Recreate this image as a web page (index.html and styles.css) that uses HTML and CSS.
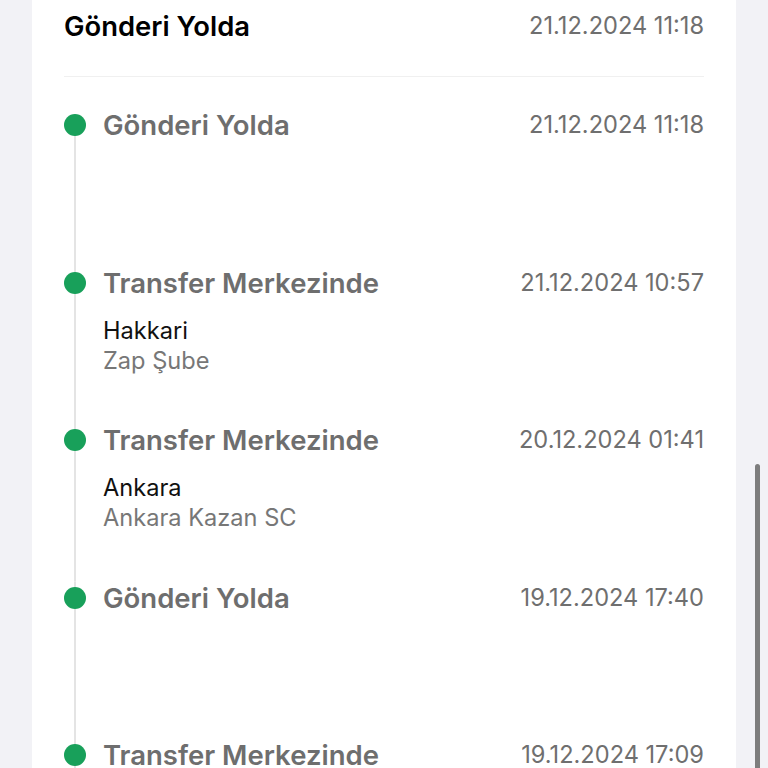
FILE: index.html
```html
<!DOCTYPE html>
<html lang="tr">
<head>
<meta charset="utf-8">
<link rel="stylesheet" href="styles.css">
</head>
<body>
<div class="page">
  <div class="card">
    <div class="header">
      <div class="header-title">Gönderi Yolda</div>
      <div class="date">21.12.2024 11:18</div>
    </div>
    <div class="timeline">
      <div class="item first">
        <div class="rail"><span class="dot"></span></div>
        <div class="body">
          <div class="row"><span class="title">Gönderi Yolda</span><span class="date">21.12.2024 11:18</span></div>
        </div>
      </div>
      <div class="item">
        <div class="rail"><span class="dot"></span></div>
        <div class="body">
          <div class="row"><span class="title">Transfer Merkezinde</span><span class="date">21.12.2024 10:57</span></div>
          <div class="city">Hakkari</div>
          <div class="branch">Zap Şube</div>
        </div>
      </div>
      <div class="item">
        <div class="rail"><span class="dot"></span></div>
        <div class="body">
          <div class="row"><span class="title">Transfer Merkezinde</span><span class="date">20.12.2024 01:41</span></div>
          <div class="city">Ankara</div>
          <div class="branch">Ankara Kazan SC</div>
        </div>
      </div>
      <div class="item">
        <div class="rail"><span class="dot"></span></div>
        <div class="body">
          <div class="row"><span class="title">Gönderi Yolda</span><span class="date">19.12.2024 17:40</span></div>
        </div>
      </div>
      <div class="item">
        <div class="rail"><span class="dot"></span></div>
        <div class="body">
          <div class="row"><span class="title">Transfer Merkezinde</span><span class="date">19.12.2024 17:09</span></div>
        </div>
      </div>
    </div>
  </div>
</div>
<div class="scroll-indicator"></div>
</body>
</html>
```
FILE: styles.css
```css
html, body {
  margin: 0;
  padding: 0;
  height: 768px;
  overflow: hidden;
  background: #f2f2f6;
  font-family: Inter, "Noto Sans", sans-serif;
}
.page {
  padding: 0 32px;
}
.card {
  background: #ffffff;
  padding: 10px 32px 0;
  min-height: 800px;
}
.header {
  display: flex;
  justify-content: space-between;
  align-items: center;
  height: 32px;
  padding-bottom: 34px;
  border-bottom: 1px solid #f0f0f0;
}
.header-title {
  font-size: 27.4px;
  font-weight: 600;
  color: #000;
  line-height: 32px;
}
.date {
  font-size: 23.6px;
  color: #6f6f6f;
  line-height: 32px;
  font-weight: 400;
}
.timeline {
  padding-top: 32px;
}
.item {
  display: grid;
  grid-template-columns: 22px 1fr;
  column-gap: 17px;
  height: 157.5px;
}
.rail {
  background: linear-gradient(#e4e4e4, #e4e4e4) center / 2px 100% no-repeat;
  display: flex;
  justify-content: center;
}
.item.first .rail {
  background-position: center 16px;
}
.dot {
  width: 22px;
  height: 22px;
  border-radius: 50%;
  background: #18a05a;
  margin-top: 5px;
}
.row {
  display: flex;
  justify-content: space-between;
  align-items: center;
  height: 32px;
}
.title {
  font-size: 27.5px;
  font-weight: 600;
  color: #6e6e6e;
  line-height: 32px;
}
.city {
  margin-top: 17px;
  font-size: 23.6px;
  line-height: 30px;
  color: #111;
}
.branch {
  font-size: 23.6px;
  line-height: 30px;
  color: #777;
}
.scroll-indicator {
  position: fixed;
  left: 755px;
  top: 464px;
  width: 5px;
  height: 320px;
  border-radius: 3px;
  background: #7d7d7d;
}
```
